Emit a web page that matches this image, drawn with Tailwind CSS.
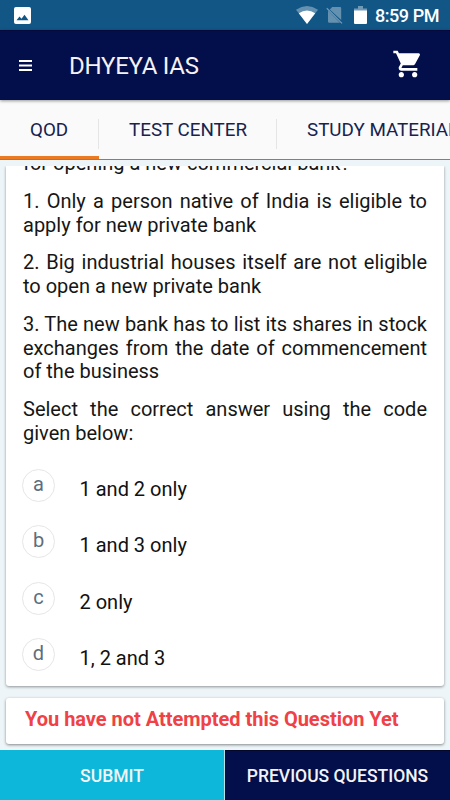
<!DOCTYPE html>
<html lang="en">
  <head>
    <meta charset="utf-8" />
    <meta name="viewport" content="width=device-width, initial-scale=1.0" />
    <title>DHYEYA IAS</title>
    <script src="https://cdn.jsdelivr.net/npm/@tailwindcss/browser@4"></script>
  </head>

  <body class="bg-[#edf5f8] font-['Roboto',sans-serif]">
    <div class="flex flex-col w-[450px] h-[800px] overflow-hidden">
      <!-- Status bar -->
      <div class="flex items-center h-[30px] shrink-0 bg-[#125686] text-white pl-3.5 pr-[11px]">
        <svg class="w-[17px] h-[17px] mr-auto" viewBox="0 0 17 17">
          <rect width="17" height="17" rx="2" fill="#fff" />
          <path d="M2.5 13.2 5.5 9.4l2 2.3 3-3.9 4 5.4z" fill="#125686" />
        </svg>
        <svg class="w-[22px] h-[18px]" viewBox="0 0 22 18">
          <path d="M0 3.8Q11-3.6 22 3.8L11 18z" fill="#fff" fill-opacity=".35" />
          <path d="M2.8 7.3Q11 1.6 19.2 7.3L11 18z" fill="#fff" />
        </svg>
        <svg class="w-[17px] h-[18px] ml-2" viewBox="0 0 17 18">
          <path d="M6.2 1H14q1.2 0 1.2 1.2V14L3.8 3.4zM2.4 5 14 16.8H3.2q-1.2 0-1.2-1.2V5z" fill="#fff" fill-opacity=".35" />
          <path d="M.8 2.2 16 17.4" stroke="#fff" stroke-opacity=".4" stroke-width="1.3" />
        </svg>
        <svg class="w-[13px] h-[18px] ml-[11px]" viewBox="0 0 13 18">
          <path d="M0 2.5h4V0h5v2.5h4V5H0z" fill="#fff" fill-opacity=".4" />
          <path d="M0 4.5h13V17q0 1-1 1H1q-1 0-1-1z" fill="#fff" />
        </svg>
        <span class="ml-2 mt-0.5 text-[18px] leading-5 font-medium tracking-[-0.45px] whitespace-nowrap">8:59 PM</span>
      </div>

      <!-- App bar -->
      <header class="relative z-10 flex items-center h-[70px] shrink-0 bg-[#030f4a] border-t border-[#02093a] shadow-[0_1px_3px_rgba(0,0,0,0.4)] pl-[19px] pr-[30px]">
        <svg class="w-[13px] h-[11px] mt-[-1px]" viewBox="0 0 13 11">
          <path d="M0 1h13M0 5.5h13M0 10h13" stroke="#fff" stroke-width="2.1" />
        </svg>
        <h1 class="ml-[37px] mt-px text-[24px] leading-7 tracking-[-0.25px] text-[#f4f2f5]">DHYEYA IAS</h1>
        <svg class="w-[32px] h-[32px] ml-auto mr-[-3.5px] mt-[-3px]" viewBox="0 0 24 24" fill="#fff">
          <path d="M7 18c-1.1 0-1.99.9-1.99 2S5.9 22 7 22s2-.9 2-2-.9-2-2-2zM1 2v2h2l3.6 7.59-1.35 2.45c-.16.28-.25.61-.25.96 0 1.1.9 2 2 2h12v-2H7.42c-.14 0-.25-.11-.25-.25l.03-.12.9-1.63h7.45c.75 0 1.41-.41 1.75-1.03l3.58-6.49A1.003 1.003 0 0 0 20 4H5.21l-.94-2H1zm16 16c-1.1 0-1.99.9-1.99 2s.89 2 1.99 2 2-.9 2-2-.9-2-2-2z" />
        </svg>
      </header>

      <!-- Tabs -->
      <nav class="flex h-[60px] shrink-0 bg-[#fafafa] border-b border-[#dd6515] overflow-hidden text-[18.8px] text-[#17234f] whitespace-nowrap">
        <a class="relative flex items-center w-[99px] shrink-0 pl-[30px] border-b-[3px] border-[#ec7a20] pt-[5px]">QOD
          <span class="absolute right-0 top-[19px] w-px h-[30px] bg-[#e5e5e5]"></span>
        </a>
        <a class="relative flex items-center w-[178px] shrink-0 pl-[30px] pt-0.5">TEST CENTER
          <span class="absolute right-0 top-[19px] w-px h-[30px] bg-[#e5e5e5]"></span>
        </a>
        <a class="flex items-center shrink-0 pl-[30px] pt-0.5">STUDY MATERIAL</a>
      </nav>

      <!-- Question -->
      <main class="flex flex-col h-[590px] shrink-0 pt-1.5 px-1.5">
        <div class="h-[525px] shrink-0 -mx-1.5 px-1.5 overflow-hidden">
          <section class="flex flex-col justify-end h-[519.5px] bg-white rounded-b-[3px] shadow-[0_1px_3px_rgba(0,0,0,0.4)] px-[17px] pb-[14.5px]">
            <div class="flex flex-col gap-[14px] text-[20px] leading-[23.75px] text-[#161616] text-justify">
              <p class="whitespace-nowrap">for opening a new commercial bank?</p>
              <p>1. Only a person native of India is eligible to apply for new private bank</p>
              <p>2. Big industrial houses itself are not eligible to open a new private bank</p>
              <p>3. The new bank has to list its shares in stock exchanges from the date of commencement of the business</p>
              <p>Select the correct answer using the code given below:</p>
            </div>
            <ul class="flex flex-col gap-[23.3px] mt-[23.5px] -ml-px text-[20px] text-[#111]">
              <li class="flex items-center h-[33px]">
                <span class="flex justify-center items-center size-[33px] pb-[3px] rounded-full border border-[#e6e6e6] text-[#606d7c]">a</span>
                <span class="ml-[24.5px] mt-[7px]">1 and 2 only</span>
              </li>
              <li class="flex items-center h-[33px]">
                <span class="flex justify-center items-center size-[33px] pb-[3px] rounded-full border border-[#e6e6e6] text-[#606d7c]">b</span>
                <span class="ml-[24.5px] mt-[7px]">1 and 3 only</span>
              </li>
              <li class="flex items-center h-[33px]">
                <span class="flex justify-center items-center size-[33px] pb-[3px] rounded-full border border-[#e6e6e6] text-[#606d7c]">c</span>
                <span class="ml-[24.5px] mt-[7px]">2 only</span>
              </li>
              <li class="flex items-center h-[33px]">
                <span class="flex justify-center items-center size-[33px] pb-[3px] rounded-full border border-[#e6e6e6] text-[#606d7c]">d</span>
                <span class="ml-[24.5px] mt-[7px]">1, 2 and 3</span>
              </li>
            </ul>
          </section>
        </div>
        <section class="flex items-center h-[46px] shrink-0 mt-[7px] pl-[19px] pb-[5px] bg-white rounded-[3px] shadow-[0_1px_3px_rgba(0,0,0,0.45)]">
          <p class="text-[20px] font-bold tracking-[-0.02px] whitespace-nowrap text-[#ef4146]">You have not Attempted this Question Yet</p>
        </section>
      </main>

      <!-- Bottom buttons -->
      <footer class="flex h-[50px] shrink-0 text-[17.5px] font-medium text-[#f3f3f6]">
        <button class="w-[225px] pt-[3px] bg-[#0cb7da] border-r border-[#b9dfe8]">SUBMIT</button>
        <button class="w-[225px] pt-0.5 bg-[#030f4a] border-t border-[#02072b]">PREVIOUS QUESTIONS</button>
      </footer>
    </div>
  </body>
</html>
